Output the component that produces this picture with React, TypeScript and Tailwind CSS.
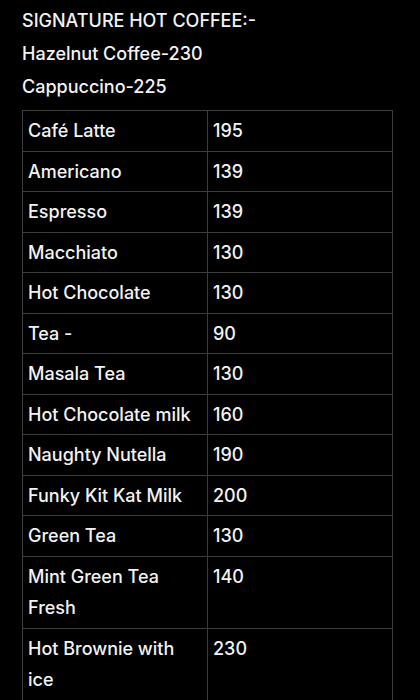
import React from "react";

const rows: [string, string][] = [
  ["Café Latte", "195"],
  ["Americano", "139"],
  ["Espresso", "139"],
  ["Macchiato", "130"],
  ["Hot Chocolate", "130"],
  ["Tea -", "90"],
  ["Masala Tea", "130"],
  ["Hot Chocolate milk", "160"],
  ["Naughty Nutella", "190"],
  ["Funky Kit Kat Milk", "200"],
  ["Green Tea", "130"],
  ["Mint Green Tea Fresh", "140"],
  ["Hot Brownie with ice", "230"],
];

export default function App() {
  return (
    <div
      className="min-h-[700px] w-[420px] overflow-hidden bg-black text-[#f2f2f2] pt-[4px] pl-[22px] font-medium"
      style={{ fontFamily: "Inter, 'Noto Sans', sans-serif" }}
    >
      <div className="text-[18px] leading-[33px]">
        <p>SIGNATURE HOT COFFEE:-</p>
        <p>Hazelnut Coffee-230</p>
        <p>Cappuccino-225</p>
      </div>
      <table className="mt-[7px] w-[371px] border-collapse text-[18px] leading-[31.5px]">
        <tbody>
          {rows.map(([name, price]) => (
            <tr key={name}>
              <td className="w-[185px] border border-[#3d3d3d] px-[5px] pt-[4px] pb-[4px] align-top">
                {name}
              </td>
              <td className="border border-[#3d3d3d] px-[5px] pt-[4px] pb-[4px] align-top">
                {price}
              </td>
            </tr>
          ))}
        </tbody>
      </table>
    </div>
  );
}
